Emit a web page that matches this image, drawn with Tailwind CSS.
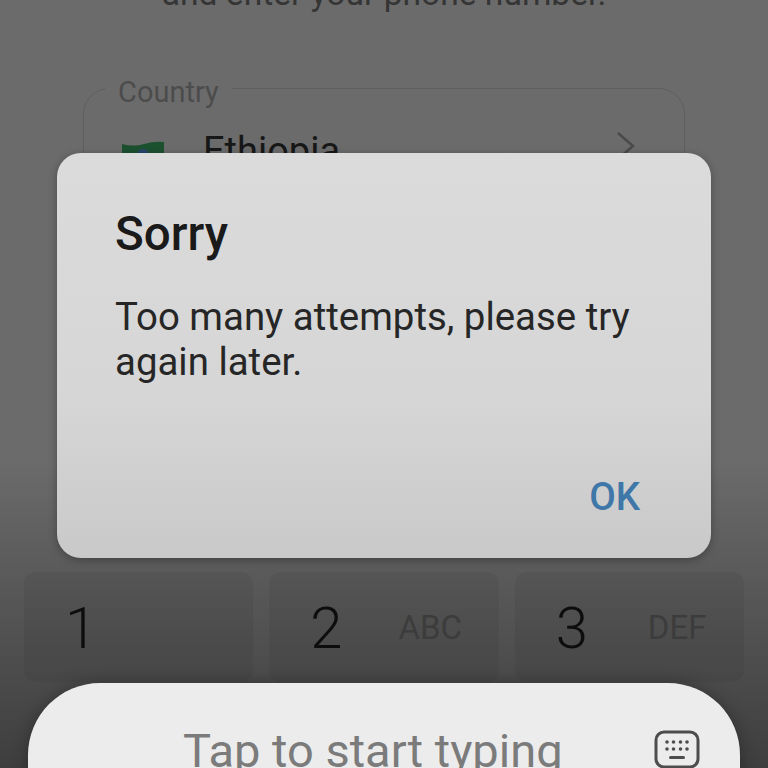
<!DOCTYPE html>
<html lang="en">
<head>
    <meta charset="UTF-8">
    <meta name="viewport" content="width=device-width, initial-scale=1.0">
    <title>Sorry</title>
    <script src="https://cdn.jsdelivr.net/npm/@tailwindcss/browser@4"></script>
</head>
<body class="font-['Roboto',sans-serif]">
    <div class="relative w-[768px] h-[768px] overflow-hidden bg-gradient-to-b from-[#6b6b6b] from-60% to-[#3e3e3e]">
        <!-- page behind the dialog -->
        <p class="-mt-[26px] text-center text-[33.6px] leading-[40px] text-[#353535]">and enter your phone number.</p>

        <fieldset class="mt-[53px] mx-[83px] h-[180px] border border-[#5f5f5f] rounded-[26px] pl-[21px] pr-[48px]">
            <legend class="px-[13px] pt-[8px] text-[29px] leading-[34px] text-[#4c4c4c]">Country</legend>
            <div class="flex items-center h-[60px] mt-[12px]">
                <svg class="ml-[17px] mt-[10px] opacity-85" width="42" height="32" viewBox="0 0 42 32">
                    <path d="M0 4q12 3 22 0t20-2v12q-10-2-20 1t-22 0z" fill="#0f4d26"/>
                    <path d="M0 14q12 3 22 1t20-1v14H0z" fill="#7c7a12"/>
                    <circle cx="21" cy="15" r="6" fill="#1d3f6e"/>
                </svg>
                <span class="ml-[39px] text-[38px] text-[#171717]">Ethiopia</span>
                <svg class="ml-auto -mt-[10px]" width="20" height="30" viewBox="0 0 20 30" fill="none" stroke="#4a4a4a" stroke-width="2.5"><path d="M2 2l15 13-15 13"/></svg>
            </div>
        </fieldset>

        <div class="grid grid-cols-3 gap-[16px] mx-[24px] mt-[325px]">
            <div class="h-[110px] rounded-[12px] bg-black/5 flex items-center pt-[2px]">
                <span class="ml-[41px] text-[58px] font-light text-[#0d0d0d]">1</span>
            </div>
            <div class="h-[110px] rounded-[12px] bg-black/5 flex items-center pt-[2px]">
                <span class="ml-[41px] text-[58px] font-light text-[#0d0d0d]">2</span>
                <span class="ml-[56px] text-[33px] text-[#3c3c3c]">ABC</span>
            </div>
            <div class="h-[110px] rounded-[12px] bg-black/5 flex items-center pt-[2px]">
                <span class="ml-[41px] text-[58px] font-light text-[#0d0d0d]">3</span>
                <span class="ml-[60px] text-[33px] text-[#3c3c3c]">DEF</span>
            </div>
        </div>

        <!-- dialog -->
        <div class="absolute left-[57px] top-[153px] w-[654px] h-[405px] rounded-[24px] bg-gradient-to-b from-[#dbdbdb] via-[#d6d6d6] via-60% to-[#c9c9c9] shadow-[0_2px_8px_rgba(0,0,0,0.3)] pl-[58px] pr-[60px] pt-[52px]">
            <h2 class="text-[47.5px] leading-[58px] font-medium text-[#1a1a1a]">Sorry</h2>
            <p class="mt-[31px] text-[38.4px] leading-[45px] text-[#262626]">Too many attempts, please try again later.</p>
            <div class="absolute right-[71px] bottom-[38px] text-[38.5px] leading-[46px] font-medium text-[#3f77a8]">OK</div>
        </div>

        <!-- bottom input pill -->
        <div class="absolute left-[28px] top-[683px] w-[712px] h-[170px] rounded-[72px] bg-[#ececec] shadow-[0_0_16px_rgba(0,0,0,0.3)]">
            <span class="absolute left-[155px] top-[43px] text-[47px] leading-[50px] text-[#7b7b7b]">Tap to start typing</span>
            <svg class="absolute left-[626px] top-[47px]" width="46" height="40" viewBox="0 0 46 40" fill="none">
                <rect x="2" y="2" width="42" height="35" rx="8" stroke="#4d4d4d" stroke-width="3"/>
                <g fill="#4d4d4d">
                    <circle cx="13" cy="12" r="1.8"/><circle cx="19.5" cy="12" r="1.8"/><circle cx="26.5" cy="12" r="1.8"/><circle cx="33" cy="12" r="1.8"/>
                    <circle cx="13" cy="19" r="1.8"/><circle cx="19.5" cy="19" r="1.8"/><circle cx="26.5" cy="19" r="1.8"/><circle cx="33" cy="19" r="1.8"/>
                </g>
                <rect x="15" y="26" width="16" height="3" rx="1.5" fill="#4d4d4d"/>
            </svg>
        </div>
    </div>
</body>
</html>
